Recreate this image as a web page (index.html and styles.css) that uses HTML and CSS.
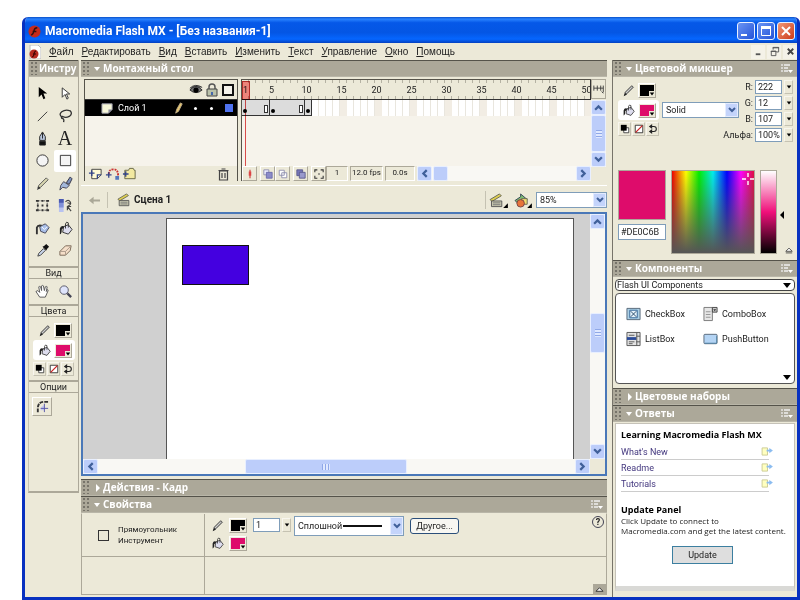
FILE: index.html
```html
<!DOCTYPE html>
<html lang="ru">
<head>
  <meta charset="UTF-8">
  <meta name="viewport" content="width=device-width, initial-scale=1.0">
  <title>Macromedia Flash MX - [Без названия-1]</title>
  <link rel="stylesheet" href="styles.css">
</head>
<body>
  <!-- shared icons -->
  <svg class="sprite" aria-hidden="true">
    <symbol id="pencil" viewBox="0 0 16 16"><path d="M3 14l1-4 8-8 2 2-8 8z" fill="#999" stroke="#444"/><path d="M5 11l7-7" stroke="#ddd"/><path d="M2 15l2-4 2 2z" fill="#222"/></symbol>
    <symbol id="bucket" viewBox="0 0 16 16"><path d="M6 6l5-2 4 5-4 5-6-2z" fill="#dde" stroke="#333"/><path d="M8 8V3q1-3 3-1v5" fill="none" stroke="#333"/><path d="M7 6Q3 4 2 8v6q2 0 2-5z" fill="#222"/></symbol>
    <symbol id="bw" viewBox="0 0 12 12"><path d="M4.500 4.500h6v6h-6z" fill="#fff" stroke="#333"/><path d="M1 1h7v7H1z"/></symbol>
    <symbol id="nocolor" viewBox="0 0 12 12"><path d="M1.500 1.500h9v9h-9z" fill="#fff" stroke="#222"/><path d="M2 10l8-8" stroke="#c22" stroke-width="1.500"/></symbol>
    <symbol id="swap" viewBox="0 0 12 12"><path d="M3 3h4q3 0 3 3t-3 3H3" fill="none" stroke="#222" stroke-width="1.300"/><path d="M5 0v6L1 3zM5 6v6L1 9z" fill="#222"/></symbol>
    <symbol id="down" viewBox="0 0 8 8"><path d="M1 2l3 3 3-3" fill="none" stroke="#40609a" stroke-width="2"/></symbol>
    <symbol id="up" viewBox="0 0 8 8"><path d="M1 6l3-3 3 3" fill="none" stroke="#40609a" stroke-width="2"/></symbol>
    <symbol id="left" viewBox="0 0 8 8"><path d="M6 1L3 4l3 3" fill="none" stroke="#40609a" stroke-width="2"/></symbol>
    <symbol id="right" viewBox="0 0 8 8"><path d="M2 1l3 3-3 3" fill="none" stroke="#40609a" stroke-width="2"/></symbol>
    <symbol id="tri" viewBox="0 0 8 8"><path d="M1 2h6L4 6z"/></symbol>
    <symbol id="opts" viewBox="0 0 12 10"><path d="M1 0v2M1 3v2M1 6v2M3 1h6M3 4h4M3 7h4" stroke="#eee" stroke-width="1.300"/><path d="M7 6h5L9.500 9z" fill="#fff"/></symbol>
    <symbol id="clap" viewBox="0 0 16 16"><path d="M1 7L11 1l2 2L3 9z" fill="#dfcf50" stroke="#665"/><path d="M2.500 8.500h11v6h-11z" fill="#c9c9b0" stroke="#555"/><path d="M4 10.500h8M4 12.500h8" stroke="#777"/></symbol>
    <symbol id="go" viewBox="0 0 14 10"><path d="M1 1h6v8H1z" fill="#ffffc0" stroke="#c9c990"/><path d="M6 4h5" stroke="#8bbcf0" stroke-width="2"/><path d="M9 1l4 3-4 3z" fill="#8bbcf0"/></symbol>
  </svg>

  <div class="window">
    <header class="titlebar">
      <svg class="app-logo" viewBox="0 0 14 14"><circle cx="7" cy="7" r="6.500" fill="#c62a1c"/><path d="M10 3Q7 3 6.500 6T3.500 11M5 7h4" fill="none" stroke="#301010" stroke-width="1.600"/></svg>
      <h1>Macromedia Flash MX - [Без названия-1]</h1>
      <button class="win-btn" aria-label="Свернуть"><svg viewBox="0 0 16 16"><path d="M3 11h6v2H3z" fill="#fff"/></svg></button>
      <button class="win-btn" aria-label="Развернуть"><svg viewBox="0 0 16 16"><path d="M3.500 4.500h9v8h-9z" fill="none" stroke="#fff"/><path d="M3 3h10v3H3z" fill="#fff"/></svg></button>
      <button class="win-btn close" aria-label="Закрыть"><svg viewBox="0 0 16 16"><path d="M4 4l8 8M12 4l-8 8" stroke="#fff" stroke-width="2"/></svg></button>
    </header>

    <nav class="menubar">
      <svg class="doc-logo" viewBox="0 0 12 14"><path d="M1 0h8l3 3v11H1z" fill="#fff" stroke="#bbb"/><circle cx="5" cy="9" r="4.500" fill="#b52a20"/><path d="M7 6Q5 6 5 9T3 12M4 9h3" fill="none" stroke="#300"/></svg>
      <a href="#"><u>Ф</u>айл</a>
      <a href="#"><u>Р</u>едактировать</a>
      <a href="#"><u>В</u>ид</a>
      <a href="#"><u>В</u>ставить</a>
      <a href="#"><u>И</u>зменить</a>
      <a href="#"><u>Т</u>екст</a>
      <a href="#"><u>У</u>правление</a>
      <a href="#"><u>О</u>кно</a>
      <a href="#"><u>П</u>омощь</a>
      <div class="doc-btns">
        <button aria-label="Свернуть документ"><svg viewBox="0 0 12 12"><path d="M3 9h5" stroke="#555" stroke-width="2"/></svg></button>
        <button aria-label="Восстановить документ"><svg viewBox="0 0 12 12"><path d="M4.500 4V1.500h6v5H8M4 2h7M2.500 5.500h5v5h-5zM2 6h6" fill="none" stroke="#555"/></svg></button>
        <button aria-label="Закрыть документ"><svg viewBox="0 0 12 12"><path d="M3 3l6 6M9 3l-6 6" stroke="#444" stroke-width="2"/></svg></button>
      </div>
    </nav>

    <div class="workspace">
      <!-- tools -->
      <aside class="tools">
        <h2 class="panel-head"><span class="grip"></span>Инстру</h2>
        <div class="tool-grid">
          <button aria-label="Стрелка"><svg viewBox="0 0 16 16"><path d="M4 1v11l3-3 2 5 2-1-2-5h4z"/></svg></button>
          <button aria-label="Выделение"><svg viewBox="0 0 16 16"><path d="M4.500 2v10l3-3 2 5 1.500-1-2-4.500h3.500z" fill="#fff" stroke="#333"/></svg></button>
          <button aria-label="Линия"><svg viewBox="0 0 16 16"><path d="M3 14L13 4" stroke="#333"/></svg></button>
          <button aria-label="Лассо"><svg viewBox="0 0 16 16"><path d="M5 10Q0 7 4 4t9-1q3 3-1 6-4 2-7 0-2 0-1 2 3 0 2 4" fill="none" stroke="#333" stroke-width="1.400"/></svg></button>
          <button aria-label="Перо"><svg viewBox="0 0 16 16"><path d="M8 1L5 6v4h6V6z" fill="#bbc8df" stroke="#222"/><path d="M8 2v6M5 11h6v4H5z" fill="#111" stroke="#222"/></svg></button>
          <button class="letter" aria-label="Текст">A</button>
          <button aria-label="Овал"><svg viewBox="0 0 16 16"><circle cx="8" cy="8" r="6" fill="#f4f4f4" stroke="#333"/></svg></button>
          <button class="active" aria-label="Прямоугольник"><svg viewBox="0 0 16 16"><path d="M2.500 2.500h11v11h-11z" fill="#f4f4f4" stroke="#333"/></svg></button>
          <button aria-label="Карандаш"><svg viewBox="0 0 16 16"><path d="M3 13l1-3 8-8 2 2-8 8z" fill="#d8d6b0" stroke="#555"/><path d="M2 15l2-4 2 2z" fill="#333"/></svg></button>
          <button aria-label="Кисть"><svg viewBox="0 0 16 16"><path d="M9 7l4-6 2 2-3 6z" fill="#7d92bd" stroke="#334"/><path d="M6 6l6 4-3 3-4-1-3 3 1-5z" fill="#a4b9dc" stroke="#445"/></svg></button>
          <button aria-label="Трансформация"><svg viewBox="0 0 16 16"><path d="M3 3h10v10H3z" fill="none" stroke="#555" stroke-dasharray="2 1"/><path d="M1 2h3v2H1zM7 2h2v2H7zM12 2h3v2h-3zM2 7h2v2H2zM7 7h2v2H7zM12 7h2v2h-2zM1 12h3v2H1zM7 12h2v2H7zM12 12h3v2h-3z" fill="#333"/></svg></button>
          <button aria-label="Заливка градиентом"><svg viewBox="0 0 16 16"><path d="M1 1h5v14H1z" fill="#b8c2f0"/><path d="M1 1h5v9H1z" fill="#8090d8"/><path d="M1 1h5v4H1z" fill="#4a59b0"/><path d="M8 4q3-3 5 0t-3 5M10 5l4 1M10 9l4 5m-4-1v-4h4" fill="none" stroke="#444" stroke-width="1.200"/></svg></button>
          <button aria-label="Чернильница"><svg viewBox="0 0 16 16"><path d="M5 6l6-3 4 4-4 6-5-2z" fill="#a9bfe8" stroke="#445"/><path d="M7 6l3 3 3-3" fill="none" stroke="#fff"/><path d="M2 14V7q1-3 5-2" fill="none" stroke="#333" stroke-width="2"/></svg></button>
          <button aria-label="Заливка"><svg><use href="#bucket"/></svg></button>
          <button aria-label="Пипетка"><svg viewBox="0 0 16 16"><path d="M3 14l1-3 5-5 2 2-5 5z" fill="#c8d4e8" stroke="#444"/><path d="M8 4l4 4 1-2 2-2-3-3-2 2z" fill="#111"/></svg></button>
          <button aria-label="Ластик"><svg viewBox="0 0 16 16"><path d="M2 9l6-6h6l-1 5-5 5H2z" fill="#f5dfc9" stroke="#765"/><path d="M2 9h6l6-6M8 9v4" fill="none" stroke="#a98"/></svg></button>
        </div>
        <h3>Вид</h3>
        <div class="tool-grid view-grid">
          <button aria-label="Рука"><svg viewBox="0 0 16 16"><path d="M5 14L1 8l2-1 2 2-1-6q1-1 2 0l1 4V2q1-1 2 0l1 5 1-4q1-1 2 0l-1 5 1-2q1 0 1 1l-3 7z" fill="#fff" stroke="#555"/></svg></button>
          <button aria-label="Лупа"><svg viewBox="0 0 16 16"><circle cx="6.500" cy="6.500" r="4.500" fill="#dfe4fb" stroke="#556"/><path d="M10 10l4 4" stroke="#445" stroke-width="2.400"/></svg></button>
        </div>
        <h3>Цвета</h3>
        <div class="tool-colors">
          <div class="color-row"><svg><use href="#pencil"/></svg><button class="swatch black" aria-label="Цвет линии"><svg><use href="#tri"/></svg></button></div>
          <div class="color-row on"><svg><use href="#bucket"/></svg><button class="swatch pink" aria-label="Цвет заливки"><svg><use href="#tri"/></svg></button></div>
          <div class="trio">
            <button aria-label="Чёрно-белый"><svg><use href="#bw"/></svg></button>
            <button aria-label="Нет цвета"><svg><use href="#nocolor"/></svg></button>
            <button aria-label="Поменять"><svg><use href="#swap"/></svg></button>
          </div>
        </div>
        <h3>Опции</h3>
        <div class="tool-options">
          <button class="raised" aria-label="Радиус углов"><svg viewBox="0 0 16 16"><path d="M3 14v-4q0-7 7-7h4" fill="none" stroke="#333" stroke-width="2" stroke-dasharray="4 1"/><path d="M6 12q0-5 4-5v5z" fill="#c5c9ee"/><path d="M10 5v9M6 10h8" fill="none" stroke="#55a"/></svg></button>
        </div>
      </aside>

      <!-- timeline, stage, properties -->
      <main class="center">
        <h2 class="panel-head"><span class="grip"></span><span class="fold open"></span>Монтажный стол</h2>
        <section class="timeline">
          <div class="layers">
            <div class="layer-head">
              <svg viewBox="0 0 16 14"><path d="M1 7q7-8 14 0-7 6-14 0zM1 5q6-6 14-1" fill="#777" stroke="#222"/><circle cx="8" cy="7" r="3"/></svg>
              <svg viewBox="0 0 14 14"><path d="M4 7V4q0-3 3-3t3 3v3" fill="none" stroke="#555" stroke-width="1.500"/><path d="M2 6h10v7H2z" fill="#b9c0a9" stroke="#444"/><path d="M6 9h2v3H6z" fill="#46a"/></svg>
              <svg viewBox="0 0 14 14"><path d="M2 2h10v10H2z" fill="#f4f2ea" stroke="#111" stroke-width="2"/></svg>
            </div>
            <div class="layer-row">
              <svg viewBox="0 0 14 14"><path d="M1 2h11v6l-4 4H1z" fill="#f7f7d8" stroke="#99a"/><path d="M12 8H8v4z" fill="#889"/></svg>
              <span>Слой 1</span>
              <svg viewBox="0 0 14 14"><path d="M4 12l1-4 4-7 2 1-4 8z" fill="#e8c870" stroke="#ba8"/></svg>
              <i class="dot"></i><i class="dot"></i><i class="layer-color"></i>
            </div>
            <div class="layer-space"></div>
            <div class="layer-tools">
              <button aria-label="Добавить слой"><svg viewBox="0 0 16 14"><path d="M4 2h10v6l-4 4H4z" fill="#fffbd5" stroke="#444"/><path d="M14 8h-4v4M1 6h6M4 3v6" stroke="#348" stroke-width="1.400" fill="none"/></svg></button>
              <button aria-label="Направляющая"><svg viewBox="0 0 16 14"><path d="M4 7q0-5 5-5t5 7" fill="none" stroke="#c33" stroke-width="2" stroke-dasharray="2 1"/><path d="M1 8h6M4 5v6" stroke="#348" stroke-width="1.400"/><path d="M11 9h4v4h-4z" fill="#57b"/></svg></button>
              <button aria-label="Папка"><svg viewBox="0 0 16 14"><path d="M3 3h4l1-2h4l1 2h1v9H3z" fill="#f2e9a0" stroke="#664"/><path d="M1 7h6M4 4v6" stroke="#348" stroke-width="1.400"/></svg></button>
              <button class="push" aria-label="Удалить слой"><svg viewBox="0 0 14 14"><path d="M3 4h8v9H3zM2 3.500h10M5 2h4M5.500 6v5M8.500 6v5" fill="none" stroke="#444" stroke-width="1.200"/></svg></button>
            </div>
          </div>
          <div class="frames">
            <div class="ruler">
              <span class="first">1</span><span>5</span><span>10</span><span>15</span><span>20</span><span>25</span><span>30</span><span>35</span><span>40</span><span>45</span><span>50</span>
            </div>
            <div class="frame-row">
              <div class="span four"><i class="key"></i><i class="end"></i></div>
              <div class="span five"><i class="key"></i><i class="end"></i></div>
              <div class="span one"><i class="key"></i></div>
              <div class="empty-frames"></div>
            </div>
            <div class="frame-space"></div>
            <div class="playhead"></div>
            <div class="frame-tools">
              <button class="raised" aria-label="Центрировать кадр"><svg viewBox="0 0 12 12"><path d="M6 1v10" stroke="#c33" stroke-width="1.300"/><path d="M4.500 3h3v5h-3z" fill="#d44"/></svg></button>
              <button class="raised gap" aria-label="Калька"><svg viewBox="0 0 12 12"><path d="M1 1h6v6H1z" fill="#eef" stroke="#88a"/><path d="M4 4h7v7H4z" fill="#8b8bc8" stroke="#66a"/></svg></button>
              <button class="raised" aria-label="Контуры кальки"><svg viewBox="0 0 12 12"><path d="M1.500 1.500h6v6h-6zM4.500 4.500h6v6h-6z" fill="#fff" stroke="#88a"/></svg></button>
              <button class="raised gap" aria-label="Несколько кадров"><svg viewBox="0 0 12 12"><path d="M1 1h7v7H1z" fill="#77b" stroke="#558"/><path d="M4 4h7v7H4z" fill="#99c" stroke="#558"/></svg></button>
              <button class="raised gap" aria-label="Маркеры"><svg viewBox="0 0 12 12"><path d="M4 1H1v3M1 8v3h3M8 1h3v3M11 8v3H8M5 6h2" fill="none" stroke="#333" stroke-width="1.300"/></svg></button>
              <output class="w1">1</output><output class="w2">12.0 fps</output><output class="w3">0.0s</output>
              <div class="hscroll">
                <button aria-label="Влево"><svg><use href="#left"/></svg></button>
                <span class="thumb small"></span>
                <button class="push" aria-label="Вправо"><svg><use href="#right"/></svg></button>
              </div>
            </div>
          </div>
          <div class="timeline-side">
            <button class="frame-view" aria-label="Вид кадров"><svg viewBox="0 0 14 12"><path d="M1 2v6M1 5h11M5 2v6M9 2v6M12 2v8M10 9l2 2" fill="none" stroke="#333"/></svg></button>
            <div class="vscroll">
              <button aria-label="Вверх"><svg><use href="#up"/></svg></button>
              <span class="thumb fill"></span>
              <button aria-label="Вниз"><svg><use href="#down"/></svg></button>
            </div>
          </div>
        </section>

        <section class="scenebar">
          <button class="back" aria-label="Назад"><svg viewBox="0 0 14 12"><path d="M1 6l5-4v3h7v2H6v3z" fill="#aaa797"/></svg></button>
          <svg class="scene-icon"><use href="#clap"/></svg>
          <b>Сцена 1</b>
          <button class="scene-btn" aria-label="Сцены"><svg viewBox="0 0 20 16"><use href="#clap" width="16" height="16"/><path d="M20 11v5h-5z"/></svg></button>
          <button class="scene-btn" aria-label="Символы"><svg viewBox="0 0 20 16"><path d="M2 8l6-4V1l7 6-5 2-4 3z" fill="#7ebd72" stroke="#345"/><path d="M9 6h6v6H9z" fill="#f0df70" stroke="#665"/><circle cx="8" cy="11" r="4" fill="#e8743a" stroke="#744"/><path d="M20 11v5h-5z"/></svg></button>
          <div class="combo zoom">
            <select aria-label="Масштаб"><option>85%</option></select>
            <span class="combo-arrow"><svg><use href="#down"/></svg></span>
          </div>
        </section>

        <section class="stage">
          <div class="stage-view">
            <div class="pasteboard"><div class="sheet"><div class="shape"></div></div></div>
            <div class="hscroll">
              <button aria-label="Влево"><svg><use href="#left"/></svg></button>
              <span class="thumb wide"></span>
              <button class="push" aria-label="Вправо"><svg><use href="#right"/></svg></button>
            </div>
          </div>
          <div class="stage-side">
            <div class="vscroll">
              <button aria-label="Вверх"><svg><use href="#up"/></svg></button>
              <span class="thumb mid"></span>
              <button class="bottom" aria-label="Вниз"><svg><use href="#down"/></svg></button>
            </div>
          </div>
        </section>

        <h2 class="panel-head"><span class="grip"></span><span class="fold"></span>Действия - Кадр</h2>
        <h2 class="panel-head"><span class="grip"></span><span class="fold open"></span>Свойства<svg class="opts"><use href="#opts"/></svg></h2>
        <section class="props">
          <div class="props-top">
            <div class="props-name"><i class="rect-icon"></i><p>Прямоугольник<br>Инструмент</p></div>
            <div class="props-body">
              <div class="props-colors">
                <div class="color-row"><svg><use href="#pencil"/></svg><button class="swatch black" aria-label="Цвет линии"><svg><use href="#tri"/></svg></button></div>
                <div class="color-row"><svg><use href="#bucket"/></svg><button class="swatch pink" aria-label="Цвет заливки"><svg><use href="#tri"/></svg></button></div>
              </div>
              <div class="num stroke-num"><input type="text" value="1" aria-label="Толщина"><button aria-label="Изменить толщину"><svg><use href="#tri"/></svg></button></div>
              <div class="combo stroke-style">
                <select aria-label="Стиль линии"><option>Сплошной</option></select>
                <span class="stroke-line"></span>
                <span class="combo-arrow"><svg><use href="#down"/></svg></span>
              </div>
              <button class="other">Другое...</button>
              <button class="help" aria-label="Справка">?</button>
            </div>
          </div>
          <div class="props-bottom">
            <div class="props-name"></div>
            <button class="expand" aria-label="Свернуть"><svg viewBox="0 0 10 8"><path d="M1 6l4-4 4 4z" fill="#fff" stroke="#222"/></svg></button>
          </div>
        </section>
      </main>

      <!-- right panels -->
      <aside class="right">
        <h2 class="panel-head"><span class="grip"></span><span class="fold open"></span>Цветовой микшер<svg class="opts"><use href="#opts"/></svg></h2>
        <section class="mixer">
          <div class="mixer-top">
            <div class="mixer-colors">
              <div class="color-row"><svg><use href="#pencil"/></svg><button class="swatch black" aria-label="Цвет линии"><svg><use href="#tri"/></svg></button></div>
              <div class="color-row on"><svg><use href="#bucket"/></svg><button class="swatch pink" aria-label="Цвет заливки"><svg><use href="#tri"/></svg></button></div>
              <div class="trio">
                <button aria-label="Чёрно-белый"><svg><use href="#bw"/></svg></button>
                <button aria-label="Нет цвета"><svg><use href="#nocolor"/></svg></button>
                <button aria-label="Поменять"><svg><use href="#swap"/></svg></button>
              </div>
            </div>
            <div class="combo fill-type">
              <select aria-label="Тип заливки"><option>Solid</option></select>
              <span class="combo-arrow"><svg><use href="#down"/></svg></span>
            </div>
            <div class="rgb">
              <label for="r">R:</label><div class="num"><input id="r" type="text" value="222"><button aria-label="R"><svg><use href="#tri"/></svg></button></div>
              <label for="g">G:</label><div class="num"><input id="g" type="text" value="12"><button aria-label="G"><svg><use href="#tri"/></svg></button></div>
              <label for="b">B:</label><div class="num"><input id="b" type="text" value="107"><button aria-label="B"><svg><use href="#tri"/></svg></button></div>
              <label for="a">Альфа:</label><div class="num"><input id="a" type="text" value="100%"><button aria-label="Альфа"><svg><use href="#tri"/></svg></button></div>
            </div>
          </div>
          <div class="mixer-bottom">
            <div class="current">
              <div class="current-color"></div>
              <input type="text" value="#DE0C6B" aria-label="Код цвета">
            </div>
            <div class="spectrum"><svg class="cross" viewBox="0 0 12 12"><path d="M6 0v4M6 8v4M0 6h4M8 6h4" stroke="#fff" stroke-width="1.400"/></svg></div>
            <div class="luma"></div>
            <div class="luma-side">
              <svg viewBox="0 0 6 8"><path d="M5 0v8L1 4z"/></svg>
              <button aria-label="Свернуть"><svg viewBox="0 0 10 8"><path d="M1 5l4-4 4 4zM1 7h8" fill="#fff" stroke="#333"/></svg></button>
            </div>
          </div>
        </section>

        <h2 class="panel-head"><span class="grip"></span><span class="fold open"></span>Компоненты<svg class="opts"><use href="#opts"/></svg></h2>
        <section class="components">
          <div class="comp-select">
            <select aria-label="Набор компонентов"><option>Flash UI Components</option></select>
            <svg viewBox="0 0 8 5"><path d="M0 0h8L4 5z"/></svg>
          </div>
          <div class="comp-list">
            <div class="comp"><svg viewBox="0 0 16 16"><path d="M1 2h14v12H1z" fill="#acd0e6" stroke="#567"/><path d="M4 4h8v8H4z" fill="#e6f3fb" stroke="#369"/><path d="M5 5l6 6M11 5l-6 6" stroke="#246"/></svg>CheckBox</div>
            <div class="comp"><svg viewBox="0 0 16 16"><path d="M1 1h9v14H1z" fill="#e6e6e6" stroke="#777"/><path d="M10 1h5v5h-5z" fill="#ccc" stroke="#444"/><path d="M11 3h3l-1.500 2z" fill="#333"/><path d="M3 5h5v1H3zM3 8h5v1H3zM3 11h5v1H3z" fill="#999"/></svg>ComboBox</div>
            <div class="comp"><svg viewBox="0 0 16 16"><path d="M1 1h14v14H1z" fill="#e3e3e3" stroke="#555"/><path d="M1 6h10v3H1z" fill="#2a4a98"/><path d="M3 4h6M3 11h6M3 13h4M11.500 1v14M11 5h4M11 11h4" stroke="#555"/></svg>ListBox</div>
            <div class="comp"><svg viewBox="0 0 16 16"><rect x="1" y="3" width="14" height="10" rx="1" fill="#b4d4f4" stroke="#567"/><path d="M2 12.500h12.500V5" fill="none" stroke="#58a"/></svg>PushButton</div>
            <svg class="more" viewBox="0 0 8 5"><path d="M0 0h8L4 5z"/></svg>
          </div>
        </section>

        <h2 class="panel-head"><span class="grip"></span><span class="fold"></span>Цветовые наборы</h2>
        <h2 class="panel-head"><span class="grip"></span><span class="fold open"></span>Ответы<svg class="opts"><use href="#opts"/></svg></h2>
        <section class="answers">
          <div class="answers-body">
            <h4>Learning Macromedia Flash MX</h4>
            <a href="#">What's New<svg><use href="#go"/></svg></a>
            <a href="#">Readme<svg><use href="#go"/></svg></a>
            <a href="#">Tutorials<svg><use href="#go"/></svg></a>
            <h4 class="second">Update Panel</h4>
            <p>Click Update to connect to<br>Macromedia.com and get the latest content.</p>
            <button class="update">Update</button>
          </div>
        </section>
      </aside>
    </div>
  </div>
</body>
</html>
```
FILE: styles.css
```css
* {
  box-sizing: border-box;
}

body, html {
  margin: 0;
  height: 100%;
}

body {
  background: #fff;
  padding: 17px 0 0 22px;
  font-family: Roboto, "Liberation Sans", sans-serif;
  font-size: 9px;
  line-height: 12px;
  color: #222;
  overflow: hidden;
}

button, input, select {
  font: inherit;
  color: inherit;
  margin: 0;
  padding: 0;
  border: none;
  border-radius: 0;
  background: none;
  min-width: 0;
}

button {
  display: flex;
  align-items: center;
  justify-content: center;
}

select {
  appearance: none;
}

svg {
  display: block;
  flex: none;
}

h1, h2, h3, h4, p {
  margin: 0;
  font-size: inherit;
}

a {
  color: inherit;
  text-decoration: none;
}

.sprite {
  position: absolute;
  width: 0;
  height: 0;
}

.push {
  margin-left: auto;
}

/* Window */
.window {
  height: 100%;
  display: flex;
  flex-direction: column;
  border: 3px solid #0831c0;
  border-top: none;
  border-radius: 6px 6px 0 0;
  background: #ece9d8;
  overflow: hidden;
}

.titlebar {
  display: flex;
  align-items: center;
  gap: 2px;
  height: 26px;
  margin: 0 -3px;
  padding: 2px 5px 0 6px;
  background: linear-gradient(#0a50c8, #2a83ff 8%, #0558e8 22%, #0456e4 60%, #0566ff 85%, #0340c0);
  color: #fff;
}

.titlebar h1 {
  flex: 1;
  padding-left: 2px;
  font-size: 12px;
  line-height: 16px;
}

.app-logo {
  width: 13px;
  height: 13px;
}

.win-btn {
  width: 18px;
  height: 18px;
  border: 1px solid #e8f0ff;
  border-radius: 3px;
  background: linear-gradient(135deg, #6a94f4, #2454d8);
}

.win-btn.close {
  background: linear-gradient(135deg, #f09878, #cc3a18);
}

.win-btn svg {
  width: 16px;
  height: 16px;
}

.menubar {
  display: flex;
  align-items: center;
  gap: 8px;
  height: 17px;
  padding-left: 4px;
  font-family: "Liberation Sans", Arial, sans-serif;
  font-size: 10px;
}

.doc-logo {
  width: 12px;
  height: 14px;
}

.doc-btns {
  display: flex;
  gap: 2px;
  margin-left: auto;
}

.doc-btns button {
  width: 14px;
  height: 14px;
  background: #f4f2e8;
}

.doc-btns svg {
  width: 11px;
  height: 11px;
}

.workspace {
  flex: 1;
  min-height: 0;
  display: flex;
  align-items: stretch;
  padding-left: 3px;
}

/* Panel headers */
.panel-head {
  display: flex;
  align-items: center;
  flex: none;
  height: 17px;
  border-top: 1px solid #55534a;
  border-bottom: 1px solid #b9b6a8;
  background: #aca899;
  color: #fff;
  font-family: "Open Sans", sans-serif;
  font-size: 10px;
  line-height: 15px;
  white-space: nowrap;
  overflow: hidden;
}

.grip {
  width: 6px;
  height: 13px;
  margin: 0 4px 0 2px;
  flex: none;
  background: radial-gradient(circle at 1px 1px, #77746a 1px, transparent 1px) 0 0 / 4px 4px;
}

.fold {
  width: 10px;
  flex: none;
}

.fold::before {
  content: "";
  display: block;
  width: 0;
  margin-left: 3px;
  border: 4px solid transparent;
  border-left-color: #fff;
  border-right: none;
}

.fold.open::before {
  margin-left: 1px;
  border: 3px solid transparent;
  border-top: 4px solid #fff;
  border-bottom: none;
}

.opts {
  width: 12px;
  height: 10px;
  margin: 0 4px 0 auto;
}

/* Buttons, combos and fields used everywhere */
.raised {
  border: 1px solid #fff;
  border-right-color: #aca899;
  border-bottom-color: #aca899;
}

.color-row {
  display: flex;
  align-items: center;
  height: 20px;
}

.color-row > svg {
  width: 13px;
  height: 13px;
}

.color-row.on {
  background: #fff;
  border-radius: 3px;
}

.swatch {
  width: 18px;
  height: 15px;
  border: 1px solid #fff;
  border-right-color: #aca899;
  border-bottom-color: #aca899;
  outline: 1px solid #ece9d8;
  outline-offset: -2px;
  align-items: flex-end;
  justify-content: flex-end;
}

.swatch.black {
  background: #000;
}

.swatch.pink {
  background: #de0c6b;
}

.swatch svg {
  width: 6px;
  height: 6px;
  background: #ece9d8;
}

.trio {
  display: flex;
  gap: 1px;
}

.trio button {
  width: 13px;
  height: 14px;
  border: 1px solid #f8f6ee;
  border-right-color: #c5c2b2;
  border-bottom-color: #c5c2b2;
}

.trio svg {
  width: 10px;
  height: 10px;
}

.combo {
  display: flex;
  align-items: stretch;
  height: 16px;
  border: 1px solid #7f9db9;
  background: #fff;
}

.combo select {
  flex: 1;
  padding-left: 3px;
}

.combo-arrow {
  display: flex;
  align-items: center;
  justify-content: center;
  width: 13px;
  background: #c4d4fb;
  border: 1px solid #e4ecff;
}

.combo-arrow svg {
  width: 8px;
  height: 8px;
}

.num {
  display: flex;
  gap: 2px;
  height: 14px;
}

.num input {
  width: 27px;
  padding-left: 2px;
  border: 1px solid #7f9db9;
  background: #fff;
}

.num button {
  width: 9px;
  border: 1px solid #f8f6ee;
  border-right-color: #c5c2b2;
  border-bottom-color: #c5c2b2;
}

.num button svg {
  width: 6px;
  height: 6px;
}

.hscroll, .vscroll {
  display: flex;
  background: #f9f8f4;
}

.hscroll {
  height: 15px;
}

.vscroll {
  flex-direction: column;
  width: 15px;
}

.hscroll button, .vscroll button, .thumb {
  flex: none;
  width: 15px;
  height: 15px;
  border: 1px solid #e8efff;
  border-radius: 2px;
  background: #bccdfa;
}

.hscroll button svg, .vscroll button svg {
  width: 9px;
  height: 9px;
}

.thumb {
  display: flex;
  align-items: center;
  justify-content: center;
}

/* Tools */
.tools {
  width: 51px;
  height: 433px;
  border-right: 1px solid #aca899;
  border-left: 1px solid #c5c2b2;
  border-bottom: 2px solid #aca899;
}

.tools .panel-head .grip {
  margin-right: 2px;
}

.tool-grid {
  display: grid;
  grid-template-columns: 22px 22px;
  grid-template-rows: repeat(8, 1fr);
  column-gap: 1px;
  height: 189px;
  padding: 5px 2px 4px;
}

.tool-grid svg {
  width: 15px;
  height: 15px;
}

.tool-grid .active {
  background: #fff;
  border-radius: 2px;
}

.tool-grid .letter {
  font-family: "Liberation Serif", serif;
  font-size: 20px;
}

.view-grid {
  grid-template-rows: 1fr;
  height: 25px;
  padding: 0 2px;
}

.tools h3 {
  height: 13px;
  border-top: 2px solid #aca899;
  border-bottom: 1px solid #aca899;
  font-weight: normal;
  line-height: 10px;
  text-align: center;
}

.tool-colors {
  padding: 3px 3px 3px 4px;
  height: 63px;
}

.tools .color-row {
  gap: 3px;
  padding-left: 5px;
}

.tools .trio {
  padding-top: 2px;
}

.tool-options {
  padding: 4px 3px;
}

.tool-options button {
  width: 20px;
  height: 19px;
}

.tool-options svg {
  width: 15px;
  height: 15px;
}

/* Timeline */
.center {
  flex: 1;
  min-width: 0;
  display: flex;
  flex-direction: column;
  margin: 0 5px 2px 2px;
}

.timeline {
  display: flex;
  gap: 3px;
  height: 109px;
  padding: 2px 1px 4px 3px;
  border-bottom: 1px solid #fff;
}

.layers {
  width: 154px;
  flex: none;
  display: flex;
  flex-direction: column;
  border: 1px solid #55534a;
  border-bottom: none;
}

.layer-head {
  display: flex;
  align-items: center;
  justify-content: flex-end;
  gap: 2px;
  height: 20px;
  padding-right: 2px;
  border-bottom: 1px solid #333;
}

.layer-head svg {
  width: 14px;
  height: 14px;
}

.layer-row {
  display: flex;
  align-items: center;
  height: 16px;
  padding: 0 4px 0 16px;
  background: #000;
  color: #fff;
}

.layer-row span {
  flex: 1;
  padding-left: 4px;
}

.layer-row svg {
  width: 13px;
  height: 13px;
}

.dot {
  width: 3px;
  height: 3px;
  margin-left: 9px;
  border-radius: 50%;
  background: #fff;
}

.dot + .dot {
  margin-left: 13px;
}

.layer-color {
  width: 8px;
  height: 8px;
  margin-left: 12px;
  background: #4f72ee;
}

.layer-space, .frame-space {
  flex: 1;
  background: #f6f3eb;
}

.layer-tools {
  display: flex;
  align-items: center;
  gap: 2px;
  height: 15px;
  padding: 0 6px 0 3px;
}

.layer-tools svg {
  width: 15px;
  height: 14px;
}

.frames {
  position: relative;
  flex: 1;
  min-width: 0;
  display: flex;
  flex-direction: column;
  border: 1px solid #55534a;
  border-right: none;
  border-bottom: none;
}

.ruler {
  display: flex;
  align-items: center;
  height: 20px;
  border-right: 1px solid #333;
  border-bottom: 1px solid #333;
  background:
    repeating-linear-gradient(90deg, transparent 0 6px, #b5b2a3 6px 7px) 0 0 / 100% 3px no-repeat,
    repeating-linear-gradient(90deg, transparent 0 6px, #b5b2a3 6px 7px) 0 100% / 100% 3px no-repeat;
  overflow: hidden;
}

.ruler span {
  flex: none;
  width: 35px;
  text-align: center;
}

.ruler .first {
  width: 12px;
  padding-left: 1px;
  text-align: left;
}

.frame-row {
  display: flex;
  height: 16px;
}

.span {
  display: flex;
  align-items: flex-end;
  justify-content: space-between;
  padding: 0 1px 2px;
  border-right: 1px solid #333;
  border-bottom: 1px solid #333;
  background: #dcdcdc;
}

.span.one {
  width: 7px;
}

.span.four {
  width: 28px;
}

.span.five {
  width: 35px;
}

.key {
  width: 4px;
  height: 4px;
  border-radius: 50%;
  background: #000;
}

.end {
  width: 4px;
  height: 8px;
  border: 1px solid #333;
  background: #fff;
}

.empty-frames {
  flex: 1;
  background: repeating-linear-gradient(90deg, #fff 0 6px, #e9e6de 6px 7px, #fff 7px 13px, #e9e6de 13px 14px, #fff 14px 20px, #e9e6de 20px 21px, #fff 21px 27px, #e9e6de 27px 28px, #f2ede4 28px 35px);
}

/* current frame marker lies over the ruler and the frames */
.playhead {
  position: absolute;
  left: 0;
  top: 1px;
  bottom: 15px;
  width: 8px;
  background: linear-gradient(#e05050, #e05050) 3px 0 / 1px 100% no-repeat;
  mix-blend-mode: multiply;
}

.playhead::before {
  content: "";
  display: block;
  height: 17px;
  border: 1px solid #c03030;
  background: #ff9090;
}

.frame-tools {
  display: flex;
  align-items: center;
  height: 15px;
}

.frame-tools .raised {
  width: 15px;
  height: 15px;
}

.frame-tools .gap {
  margin-left: 3px;
}

.frame-tools .raised svg {
  width: 10px;
  height: 10px;
}

.frame-tools output {
  height: 15px;
  margin-right: 2px;
  border: 1px solid #aca899;
  border-right-color: #fff;
  border-bottom-color: #fff;
  font-size: 8px;
  text-align: center;
  white-space: nowrap;
}

.w1 {
  width: 22px;
}

.w2 {
  width: 33px;
}

.w3 {
  width: 30px;
}

.frame-tools .hscroll {
  flex: 1;
}

.thumb.small {
  margin-left: 1px;
}

.timeline-side {
  display: flex;
  flex-direction: column;
  gap: 1px;
  margin-left: -3px;
}

.frame-view {
  width: 15px;
  height: 20px;
  border: 1px solid #aca899;
}

.frame-view svg {
  width: 12px;
  height: 12px;
}

.timeline-side .vscroll {
  height: 67px;
}

.thumb.fill {
  flex: 1;
}

/* Scene bar */
.scenebar {
  display: flex;
  align-items: center;
  height: 26px;
  padding-top: 2px;
  font-size: 10px;
}

.back {
  width: 27px;
  height: 16px;
  border-right: 1px solid #c5c2b2;
}

.back svg {
  width: 13px;
  height: 11px;
}

.scene-icon {
  width: 14px;
  height: 14px;
  margin: 0 3px 0 9px;
}

.scenebar b {
  flex: 1;
}

.scene-btn {
  width: 25px;
  height: 18px;
}

.scene-btn svg {
  width: 19px;
  height: 15px;
}

.scenebar b + .scene-btn {
  border-left: 1px solid #c5c2b2;
}

.zoom {
  width: 71px;
  margin-left: 1px;
  font-size: 9px;
}

/* Stage */
.stage {
  flex: 1;
  min-height: 0;
  display: flex;
  margin-bottom: 3px;
  border: 2px solid #4a78b8;
}

.stage-view {
  flex: 1;
  display: flex;
  flex-direction: column;
}

.pasteboard {
  flex: 1;
  display: flex;
  padding: 4px 16px 0 83px;
  background: #d0d0d0;
}

.sheet {
  position: relative;
  flex: 1;
  border: 1px solid #555;
  border-bottom: none;
  background: #fff;
}

.shape {
  position: absolute;
  left: 15px;
  top: 26px;
  width: 67px;
  height: 40px;
  border: 1px solid #111;
  background: #4400e0;
}

.thumb.wide {
  width: 162px;
  margin-left: 147px;
}

.thumb.wide::before {
  content: "";
  width: 8px;
  height: 6px;
  background: repeating-linear-gradient(90deg, #8fa8e8 0 1px, #dfe8ff 1px 3px);
}

.stage-side {
  display: flex;
  flex-direction: column;
  padding-bottom: 15px;
}

.stage-side .vscroll {
  flex: 1;
}

.thumb.mid {
  height: 40px;
  margin-top: 84px;
}

.thumb.mid::before, .thumb.fill::before {
  content: "";
  width: 6px;
  height: 8px;
  background: repeating-linear-gradient(#8fa8e8 0 1px, #dfe8ff 1px 3px);
}

.vscroll .bottom {
  margin-top: auto;
}

/* Properties */
.props {
  border: 1px solid #aca899;
  border-top-color: #ece9d8;
}

.props-top {
  display: flex;
  height: 43px;
  border-bottom: 1px solid #aca899;
}

.props-name {
  display: flex;
  align-items: center;
  gap: 9px;
  width: 123px;
  padding-left: 16px;
  border-right: 1px solid #aca899;
  font-size: 8px;
  line-height: 11px;
}

.rect-icon {
  width: 11px;
  height: 11px;
  border: 1px solid #333;
}

.props-body {
  flex: 1;
  display: flex;
  align-items: flex-start;
  padding: 2px 2px 0 6px;
}

.props-colors .color-row {
  gap: 5px;
  height: 18px;
}

.stroke-num {
  margin: 2px 3px 0 6px;
}

.stroke-style {
  width: 110px;
  height: 20px;
  align-items: center;
}

.stroke-style select {
  flex: none;
}

.stroke-line {
  flex: 1;
  height: 2px;
  margin-right: 8px;
  background: #111;
}

.stroke-style .combo-arrow {
  height: 18px;
}

.other {
  width: 49px;
  height: 16px;
  margin: 2px auto 0 6px;
  border: 1px solid #2b4f7a;
  border-radius: 3px;
  background: #f8f7f2;
}

.help {
  width: 12px;
  height: 12px;
  border: 1px solid #445;
  border-radius: 50%;
  font-weight: bold;
}

.props-bottom {
  display: flex;
  height: 37px;
}

.expand {
  width: 13px;
  height: 10px;
  margin: auto 0 0 auto;
  background: #aca899;
}

.expand svg {
  width: 9px;
  height: 7px;
}

/* Right panels */
.right {
  flex: none;
  width: 185px;
  display: flex;
  flex-direction: column;
  border-left: 1px solid #77746a;
}

.mixer {
  height: 183px;
  padding: 3px 4px 0 5px;
}

.mixer-top {
  display: flex;
  height: 90px;
}

.mixer-colors {
  width: 41px;
}

.mixer .color-row {
  gap: 3px;
  padding-left: 4px;
}

.mixer .trio {
  padding-top: 2px;
}

.fill-type {
  width: 79px;
  margin: 22px 0 0 3px;
}

.rgb {
  display: grid;
  grid-template-columns: auto auto;
  gap: 2px;
  align-content: start;
  align-items: center;
  justify-items: end;
  margin-left: -16px;
  flex: 1;
  justify-content: end;
}

.mixer-bottom {
  display: flex;
  gap: 5px;
}

.current {
  display: flex;
  flex-direction: column;
  gap: 4px;
  width: 48px;
}

.current-color {
  height: 50px;
  border: 1px solid #aca899;
  background: #de0c6b;
}

.current input {
  height: 16px;
  padding-left: 2px;
  border: 1px solid #7f9db9;
  background: #fff;
}

.spectrum {
  position: relative;
  width: 84px;
  height: 84px;
  border: 1px solid #aca899;
  background:
    linear-gradient(rgba(85, 85, 85, 0), #555),
    linear-gradient(90deg, #f00000, #ff0 17%, #0e0 33%, #0ee 50%, #00f 67%, #f0f 84%, #e01040);
}

.cross {
  position: absolute;
  right: 0;
  top: 2px;
  width: 12px;
  height: 12px;
}

.luma {
  width: 17px;
  height: 84px;
  border: 1px solid #aca899;
  background: linear-gradient(#fff, #f0107a 50%, #000);
}

.luma-side {
  flex: 1;
  display: flex;
  flex-direction: column;
  justify-content: space-between;
  padding-top: 41px;
  margin-left: -3px;
}

.luma-side > svg {
  width: 6px;
  height: 8px;
}

.luma-side button {
  align-self: flex-end;
}

.luma-side button svg {
  width: 8px;
  height: 7px;
}

.components {
  padding: 2px 2px 4px;
}

.comp-select {
  display: flex;
  align-items: center;
  height: 12px;
  margin-bottom: 2px;
  padding-right: 3px;
  border: 1px solid #444;
  border-radius: 4px;
  background: #fff;
}

.comp-select select {
  flex: 1;
  height: 10px;
  padding-left: 1px;
  line-height: 10px;
}

.comp-select svg, .more {
  width: 8px;
  height: 5px;
}

.comp-list {
  position: relative;
  display: grid;
  grid-template-columns: 77px 1fr;
  grid-auto-rows: 25px;
  height: 91px;
  padding: 7px 10px 0;
  border: 1px solid #555;
  border-radius: 4px;
  background: #fff;
}

.comp {
  display: flex;
  align-items: center;
  gap: 4px;
}

.comp svg {
  width: 15px;
  height: 16px;
}

.more {
  position: absolute;
  right: 3px;
  bottom: 3px;
}

.answers {
  flex: 1;
  padding: 1px 2px 6px 2px;
}

.answers-body {
  height: 100%;
  padding: 5px 4px 0 5px;
  border: 1px solid #c5c2b8;
  border-bottom: 5px solid #d9d9d6;
  background: #fff;
}

.answers h4 {
  font-family: "Open Sans", sans-serif;
  font-size: 9px;
  margin-bottom: 3px;
  color: #000;
}

.answers a {
  display: flex;
  align-items: center;
  justify-content: space-between;
  width: 148px;
  height: 16px;
  border-bottom: 1px solid #ccc;
  color: #42367e;
}

.answers a svg {
  width: 13px;
  height: 9px;
  margin-right: -5px;
}

.answers .second {
  margin: 12px 0 0;
}

.answers p {
  font-family: "Open Sans", sans-serif;
  font-size: 8px;
  line-height: 10px;
  white-space: nowrap;
}

.update {
  width: 61px;
  height: 18px;
  margin: 10px 0 0 51px;
  border: 1px solid #3c7fa0;
  background: #dedede;
}
```
